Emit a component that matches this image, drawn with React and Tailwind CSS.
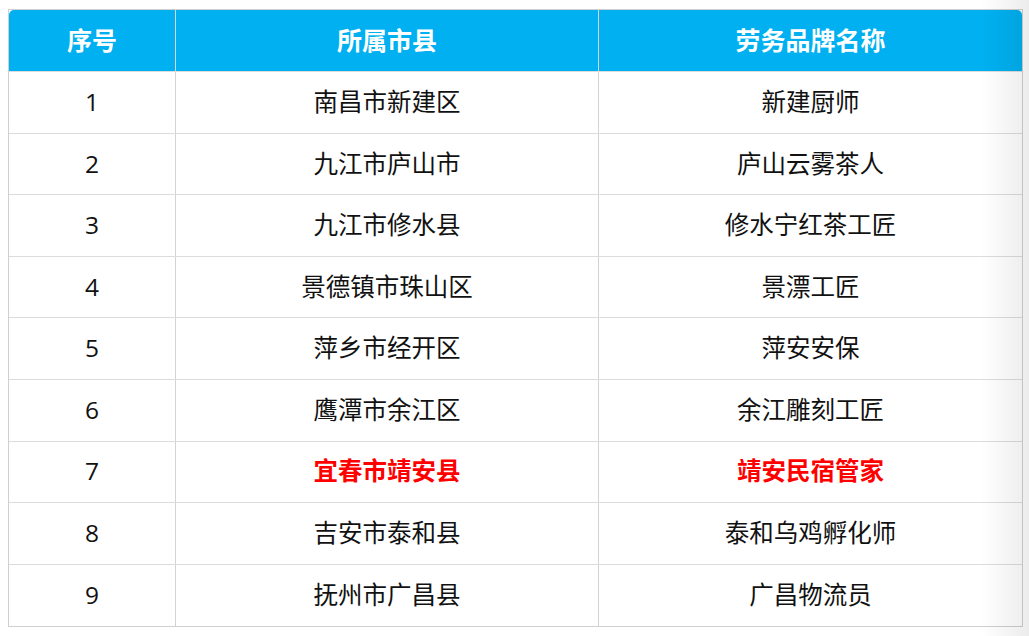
import React from "react";

const rows = [
  ["1", "南昌市新建区", "新建厨师"],
  ["2", "九江市庐山市", "庐山云雾茶人"],
  ["3", "九江市修水县", "修水宁红茶工匠"],
  ["4", "景德镇市珠山区", "景漂工匠"],
  ["5", "萍乡市经开区", "萍安安保"],
  ["6", "鹰潭市余江区", "余江雕刻工匠"],
  ["7", "宜春市靖安县", "靖安民宿管家", true],
  ["8", "吉安市泰和县", "泰和乌鸡孵化师"],
  ["9", "抚州市广昌县", "广昌物流员"],
];

export default function App() {
  return (
    <div
      className="relative w-[1029px] h-[636px] bg-white overflow-hidden"
      style={{ fontFamily: '"Open Sans", "Noto Sans CJK SC", sans-serif' }}
    >
      <div className="ml-[8px] mt-[9px] w-[1015px] border border-[#cfcfcf]">
        <div className="grid grid-cols-[167px_423px_423px] h-[62px] border-b border-[#dcdcdc] text-white font-bold text-[25px]">
          <div className="flex items-center justify-center bg-[#00b0f0] rounded-tl-[5px] border-r border-[#d6d6d6]">序号</div>
          <div className="flex items-center justify-center bg-[#00b0f0] border-r border-[#d6d6d6]">所属市县</div>
          <div className="flex items-center justify-center bg-[#00b0f0] rounded-tr-[5px]">劳务品牌名称</div>
        </div>
        {rows.map((r, i) => (
          <div
            key={i}
            className={
              "grid grid-cols-[167px_423px_423px] h-[61.6px] text-[24.5px] " +
              (i < rows.length - 1 ? "border-b border-[#dcdcdc]" : "")
            }
          >
            <div className="flex items-center justify-center border-r border-[#d3d3d3] text-[#111111]">{r[0]}</div>
            <div
              className={
                "flex items-center justify-center border-r border-[#d3d3d3] " +
                (r[3] ? "text-[#ff0000] font-bold" : "text-[#111111]")
              }
            >
              {r[1]}
            </div>
            <div
              className={
                "flex items-center justify-center " +
                (r[3] ? "text-[#ff0000] font-bold" : "text-[#111111]")
              }
            >
              {r[2]}
            </div>
          </div>
        ))}
      </div>
      <div className="pointer-events-none absolute right-0 top-0 h-full w-[48px] bg-linear-to-r from-black/0 to-black/[0.075]" />
    </div>
  );
}
